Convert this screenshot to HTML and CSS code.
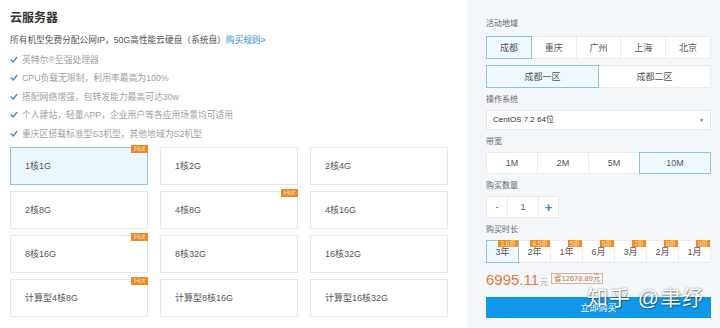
FILE: index.html
```html
<!DOCTYPE html>
<html lang="zh-CN">
<head>
  <meta charset="UTF-8">
  <title>云服务器</title>
  <link rel="stylesheet" href="styles.css">
</head>
<body>
  <div class="page">
    <!-- 左侧：机型 -->
    <div class="main">
      <h1>云服务器</h1>
      <p class="intro">所有机型免费分配公网IP，50G高性能云硬盘（系统盘）<a href="#">购买规则&gt;</a></p>
      <ul class="features">
        <li><svg class="tick" viewBox="0 0 10 8"><polyline points="1,4 4,7 9,1"/></svg>英特尔®至强处理器</li>
        <li><svg class="tick" viewBox="0 0 10 8"><polyline points="1,4 4,7 9,1"/></svg>CPU负载无限制，利用率最高为100%</li>
        <li><svg class="tick" viewBox="0 0 10 8"><polyline points="1,4 4,7 9,1"/></svg>搭配网络增强，包转发能力最高可达30w</li>
        <li><svg class="tick" viewBox="0 0 10 8"><polyline points="1,4 4,7 9,1"/></svg>个人建站，轻量APP，企业用户等各应用场景均可适用</li>
        <li><svg class="tick" viewBox="0 0 10 8"><polyline points="1,4 4,7 9,1"/></svg>重庆区搭载标准型S3机型，其他地域为S2机型</li>
      </ul>
      <div class="plans">
        <div class="plan active">1核1G<span class="hot">Hot</span></div>
        <div class="plan">1核2G</div>
        <div class="plan">2核4G</div>
        <div class="plan">2核8G</div>
        <div class="plan">4核8G<span class="hot">Hot</span></div>
        <div class="plan">4核16G</div>
        <div class="plan">8核16G<span class="hot">Hot</span></div>
        <div class="plan">8核32G</div>
        <div class="plan">16核32G</div>
        <div class="plan">计算型4核8G<span class="hot">Hot</span></div>
        <div class="plan">计算型8核16G</div>
        <div class="plan">计算型16核32G</div>
      </div>
    </div>

    <!-- 右侧：配置 -->
    <div class="side">
      <div class="label first">活动地域</div>
      <div class="btn-row cities">
        <span class="opt active">成都</span>
        <span class="opt">重庆</span>
        <span class="opt">广州</span>
        <span class="opt">上海</span>
        <span class="opt">北京</span>
      </div>
      <div class="btn-row zones">
        <span class="opt active">成都一区</span>
        <span class="opt">成都二区</span>
      </div>

      <div class="label">操作系统</div>
      <div class="select">CentOS 7.2 64位<span class="arrow">▼</span></div>

      <div class="label">带宽</div>
      <div class="btn-row bandwidth">
        <span class="opt">1M</span>
        <span class="opt">2M</span>
        <span class="opt">5M</span>
        <span class="opt wide active">10M</span>
      </div>

      <div class="label">购买数量</div>
      <div class="counter">
        <span class="minus">-</span>
        <span class="count">1</span>
        <span class="plus">+</span>
      </div>

      <div class="label">购买时长</div>
      <div class="btn-row periods">
        <span class="opt active">3年<i class="off">3.6折</i></span>
        <span class="opt">2年<i class="off">4.5折</i></span>
        <span class="opt">1年<i class="off">5折</i></span>
        <span class="opt">6月<i class="off">6折</i></span>
        <span class="opt">3月<i class="off">7折</i></span>
        <span class="opt">2月<i class="off">8折</i></span>
        <span class="opt">1月<i class="off">9折</i></span>
      </div>

      <div class="price">
        <span class="amount">6995.11</span><span class="unit">元</span>
        <span class="save">省12678.89元</span>
      </div>
      <button class="buy">立即购买</button>
      <div class="watermark">知乎 @聿纾</div>
    </div>
  </div>
</body>
</html>
```

FILE: styles.css
```css
body {
  margin: 0;
  font-family: "Liberation Sans", "Noto Sans CJK SC", sans-serif;
  color: #555;
  background: #fff;
}

.page {
  display: flex;
  width: 720px;
  height: 328px;
  overflow: hidden;
}

/* 左侧 */
.main {
  width: 467px;
  padding: 10px 0 0 10px;
  box-sizing: border-box;
}

h1 {
  margin: 0;
  font-size: 12px;
  line-height: 16px;
  color: #333;
}

.intro {
  margin: 7px 0 0;
  font-size: 8.7px;
  line-height: 14px;
  color: #555;
}

.intro a {
  color: #2a8fd8;
  text-decoration: none;
}

.features {
  list-style: none;
  margin: 3px 0 0;
  padding: 0;
}

.features li {
  display: flex;
  align-items: center;
  height: 18.5px;
  font-size: 8.8px;
  color: #a0a0a0;
}

.tick {
  width: 8px;
  height: 7px;
  margin-right: 4px;
  fill: none;
  stroke: #3a9ad9;
  stroke-width: 2;
}

.plans {
  display: grid;
  grid-template-columns: repeat(3, 138px);
  grid-auto-rows: 38px;
  column-gap: 12px;
  row-gap: 6px;
  margin-top: 4px;
}

.plan {
  position: relative;
  display: flex;
  align-items: center;
  padding-left: 14px;
  border: 1px solid #e6e6e6;
  background: #fff;
  font-size: 9px;
  color: #555;
}

.plan.active {
  background: #ecf7fd;
  border-color: #92c6d6;
}

.hot {
  position: absolute;
  top: -3px;
  right: -1px;
  width: 17px;
  height: 8px;
  line-height: 8px;
  text-align: center;
  font-size: 7px;
  color: #fbe3c4;
  background: #ee8a26;
}

/* 右侧 */
.side {
  position: relative;
  width: 253px;
  padding: 18px 9px 0 19px;
  box-sizing: border-box;
  background: #f4f7fa;
}

.label {
  height: 12px;
  line-height: 12px;
  margin: 6px 0 4px;
  font-size: 8px;
  color: #666;
}

.label.first {
  margin: 0 0 6px;
}

.btn-row {
  display: flex;
  height: 23px;
}

.opt {
  position: relative;
  flex: 1;
  display: flex;
  align-items: center;
  justify-content: center;
  background: #fff;
  border: 1px solid #ebebeb;
  margin-left: -1px;
  font-size: 9px;
  color: #555;
}

.opt:first-child {
  margin-left: 0;
}

.opt.active {
  background: #eef8fd;
  border-color: #8ec5d6;
  z-index: 1;
}

.zones {
  margin-top: 6px;
}

.select {
  position: relative;
  height: 18px;
  line-height: 18px;
  padding-left: 6px;
  background: #fff;
  border: 1px solid #e6e6e6;
  font-size: 8px;
  color: #333;
}

.arrow {
  position: absolute;
  right: 6px;
  top: 0;
  font-size: 5px;
  color: #777;
}

.bandwidth {
  height: 22px;
}

.bandwidth .wide {
  flex: 1.4;
}

.counter {
  display: inline-flex;
  height: 20px;
  background: #fff;
  border: 1px solid #eaeaea;
  font-size: 9px;
}

.counter span {
  display: flex;
  align-items: center;
  justify-content: center;
}

.minus {
  width: 20px;
  color: #555;
}

.count {
  width: 30px;
  border-left: 1px solid #eaeaea;
  border-right: 1px solid #eaeaea;
}

.plus {
  width: 19px;
  color: #1e8fdc;
  font-size: 13px;
  font-weight: bold;
}

.periods {
  height: 23px;
  margin-top: 3px;
}

.off {
  position: absolute;
  top: -1px;
  right: 0;
  height: 7px;
  line-height: 7px;
  padding: 0 2px;
  font-style: normal;
  font-size: 6.5px;
  color: #fde4c6;
  background: #ef8b22;
}

.price {
  display: flex;
  align-items: flex-end;
  height: 18px;
  margin-top: 7px;
}

.amount {
  font-size: 15px;
  line-height: 16px;
  color: #e8793a;
}

.unit {
  font-size: 8px;
  color: #b9a79b;
  margin: 0 3px 1px 1px;
}

.save {
  height: 9px;
  line-height: 9px;
  padding: 0 2px;
  margin-bottom: 4px;
  border: 1px solid #dcb296;
  font-size: 7.5px;
  color: #c57b52;
}

.buy {
  display: block;
  width: 225px;
  height: 21px;
  margin-top: 9px;
  border: none;
  background: #1198e8;
  color: #fff;
  font-family: inherit;
  font-size: 9px;
}

.watermark {
  position: absolute;
  left: 120px;
  top: 281px;
  font-size: 21px;
  color: #fff;
  text-shadow: 0 0 2px rgba(0, 0, 0, 0.45), 1px 1px 1px rgba(0, 0, 0, 0.3);
  letter-spacing: 1px;
  white-space: nowrap;
}
```
